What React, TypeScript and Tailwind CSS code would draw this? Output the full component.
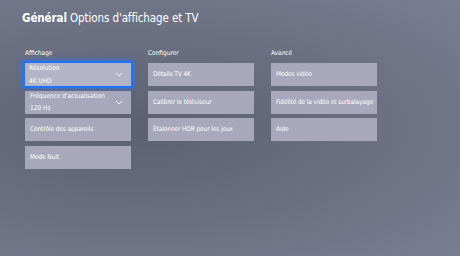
const columns = [
  {
    title: "Affichage",
    tiles: [
      { label: "Résolution", value: "4K UHD", chevron: true, selected: true },
      { label: "Fréquence d'actualisation", value: "120 Hz", chevron: true },
      { label: "Contrôle des appareils" },
      { label: "Mode Nuit" },
    ],
  },
  {
    title: "Configurer",
    tiles: [
      { label: "Détails TV 4K" },
      { label: "Calibrer le téléviseur" },
      { label: "Étalonner HDR pour les jeux" },
    ],
  },
  {
    title: "Avancé",
    tiles: [
      { label: "Modes vidéo" },
      { label: "Fidélité de la vidéo et surbalayage" },
      { label: "Aide" },
    ],
  },
];

type Tile = { label: string; value?: string; chevron?: boolean; selected?: boolean };

function Chevron() {
  return (
    <svg width="8" height="5" viewBox="0 0 8 5" className="shrink-0">
      <path d="M1 1l3 3 3-3" fill="none" stroke="#f4f4f8" strokeWidth="1" />
    </svg>
  );
}

function TileBox({ tile }: { tile: Tile }) {
  if (tile.selected) {
    return (
      <div className="h-[27px] -mx-[2px] -my-[2px] flex items-center justify-between rounded-[2px] border-2 border-[#1f73ff] bg-[#b3b4c6] pl-[4px] pr-[8px] shadow-[0_0_5px_1px_rgba(40,120,255,0.7)]">
        <div className="flex flex-col leading-none">
          <span className="text-[6.5px]">{tile.label}</span>
          <span className="mt-[6px] text-[6.5px]">{tile.value}</span>
        </div>
        <Chevron />
      </div>
    );
  }
  return (
    <div className="h-[23px] flex items-center justify-between bg-[#a7a8bb] pl-[5px] pr-[8px]">
      {tile.value ? (
        <div className="flex flex-col leading-none">
          <span className="text-[6.5px]">{tile.label}</span>
          <span className="mt-[6px] text-[6.5px]">{tile.value}</span>
        </div>
      ) : (
        <span className="whitespace-nowrap text-[6.5px] leading-none tracking-[-0.1px]">{tile.label}</span>
      )}
      {tile.chevron && <Chevron />}
    </div>
  );
}

export default function App() {
  return (
    <div
      className="relative h-[256px] w-[460px] overflow-hidden bg-[radial-gradient(ellipse_at_30%_50%,#5c6172_0%,#686d7f_45%,#7a7e92_100%)] text-white"
      style={{ fontFamily: '"Liberation Sans Narrow", "DejaVu Sans Condensed", Lato, sans-serif' }}
    >
      <div className="pl-[22px] pt-[9px] text-[11.5px] leading-[18px] tracking-[-0.1px]">
        <span className="font-bold">Général</span> Options d'affichage et TV
      </div>
      <div className="mt-[22px] flex gap-[17px] pl-[25px]">
        {columns.map((col) => (
          <div key={col.title} className="w-[106px]">
            <div className="mb-[6px] text-[6.5px] leading-[8px]">{col.title}</div>
            <div className="flex flex-col gap-[4.5px]">
              {col.tiles.map((t) => (
                <TileBox key={t.label} tile={t} />
              ))}
            </div>
          </div>
        ))}
      </div>
    </div>
  );
}
